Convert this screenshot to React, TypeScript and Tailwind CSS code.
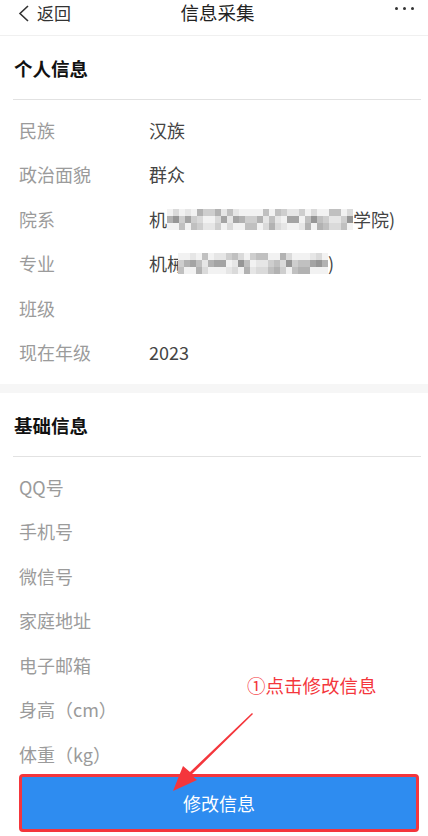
import React from 'react';

const font = { fontFamily: '"Noto Sans CJK SC", "Noto Sans", sans-serif' };

// light to dark greys used for the pixelated (mosaic) parts of the text
const shades = [
  'bg-[#f2f2f2]', 'bg-[#e6e6e6]', 'bg-[#dadada]', 'bg-[#cecece]',
  'bg-[#c0c0c0]', 'bg-[#b2b2b2]', 'bg-[#a4a4a4]', 'bg-[#969696]',
];

function Mosaic({ cols, seed }: { cols: number; seed: number }) {
  const cells: string[] = [];
  for (let c = 0; c < cols; c++) {
    for (let r = 0; r < 3; r++) {
      const n = (c * 37 + r * 11 + seed * 53 + ((c * c + seed) % 7) * 5) % 8;
      // middle band darker, edges lighter
      const v = r === 1 ? n : Math.max(0, n - 2);
      cells.push(shades[v]);
    }
  }
  return (
    <span className="grid grid-flow-col grid-rows-3 blur-[0.6px]">
      {cells.map((c, i) => (
        <span key={i} className={'h-[7px] w-[6px] ' + c} />
      ))}
    </span>
  );
}

function Row({ label, children }: { label: string; children?: React.ReactNode }) {
  return (
    <div className="flex h-[44.5px] items-center pl-[19px] text-[18px]">
      <div className="w-[130px] text-[#9b9b9b]">{label}</div>
      <div className="flex items-center text-[#444]">{children}</div>
    </div>
  );
}

function Heading({ title }: { title: string }) {
  return (
    <div className="ml-[13px] mr-[7px] flex h-[64px] items-center border-b border-[#e2e2e2] pt-[3px] pl-[1px] text-[18.5px] font-bold text-[#111]">
      {title}
    </div>
  );
}

export default function App() {
  return (
    <div className="relative h-[836px] w-[428px] overflow-hidden bg-white" style={font}>
      {/* nav */}
      <div className="grid h-[36px] grid-cols-[1fr_auto_1fr] items-start border-b border-[#f0f0f0] pr-[14px] pl-[18px] pt-[1px]">
        <div className="flex h-[24px] items-center gap-[7px] text-[17px] text-[#333]">
          <svg width="12" height="17" viewBox="0 0 12 17">
            <polyline points="10,1 2,8.5 10,16" fill="none" stroke="#333" strokeWidth="1.6" />
          </svg>
          <span>返回</span>
        </div>
        <div className="flex h-[24px] items-center pl-[3px] text-[18.5px] text-[#222]">信息采集</div>
        <div className="flex h-[14px] items-center justify-end gap-[5px]">
          <span className="h-[3px] w-[3px] rounded-full bg-[#333]" />
          <span className="h-[3px] w-[3px] rounded-full bg-[#333]" />
          <span className="h-[3px] w-[3px] rounded-full bg-[#333]" />
        </div>
      </div>

      {/* 个人信息 */}
      <Heading title="个人信息" />
      <div className="pt-[8px] pb-[9px]">
        <Row label="民族">汉族</Row>
        <Row label="政治面貌">群众</Row>
        <Row label="院系">
          <span>机</span>
          <Mosaic cols={31} seed={1} />
          <span>学院)</span>
        </Row>
        <Row label="专业">
          <span>机械</span>
          <span className="-ml-[7px]">
            <Mosaic cols={25} seed={4} />
          </span>
          <span>)</span>
        </Row>
        <Row label="班级" />
        <Row label="现在年级">2023</Row>
      </div>
      <div className="h-[9px] bg-[#f6f6f6]" />

      {/* 基础信息 */}
      <Heading title="基础信息" />
      <div className="pt-[8px]">
        <Row label="QQ号" />
        <Row label="手机号" />
        <Row label="微信号" />
        <Row label="家庭地址" />
        <Row label="电子邮箱" />
        <Row label="身高（cm）" />
        <Row label="体重（kg）" />
      </div>

      {/* bottom button with annotation frame */}
      <div className="absolute top-[774px] left-[19px] flex h-[58px] w-[400px] items-center justify-center rounded-[4px] border-[3.5px] border-[#f4363c] bg-[#2e8cf0] text-[18px] text-white">
        修改信息
      </div>

      {/* annotation */}
      <div className="absolute top-[672px] left-[247px] text-[18.5px] text-[#f4363c]">①点击修改信息</div>
      <svg className="absolute top-0 left-0" width="428" height="836" viewBox="0 0 428 836">
        <polygon points="252,713 190,772 183,766 173,791 197,780 191,775 253,714" fill="#f4363c" />
      </svg>
    </div>
  );
}
